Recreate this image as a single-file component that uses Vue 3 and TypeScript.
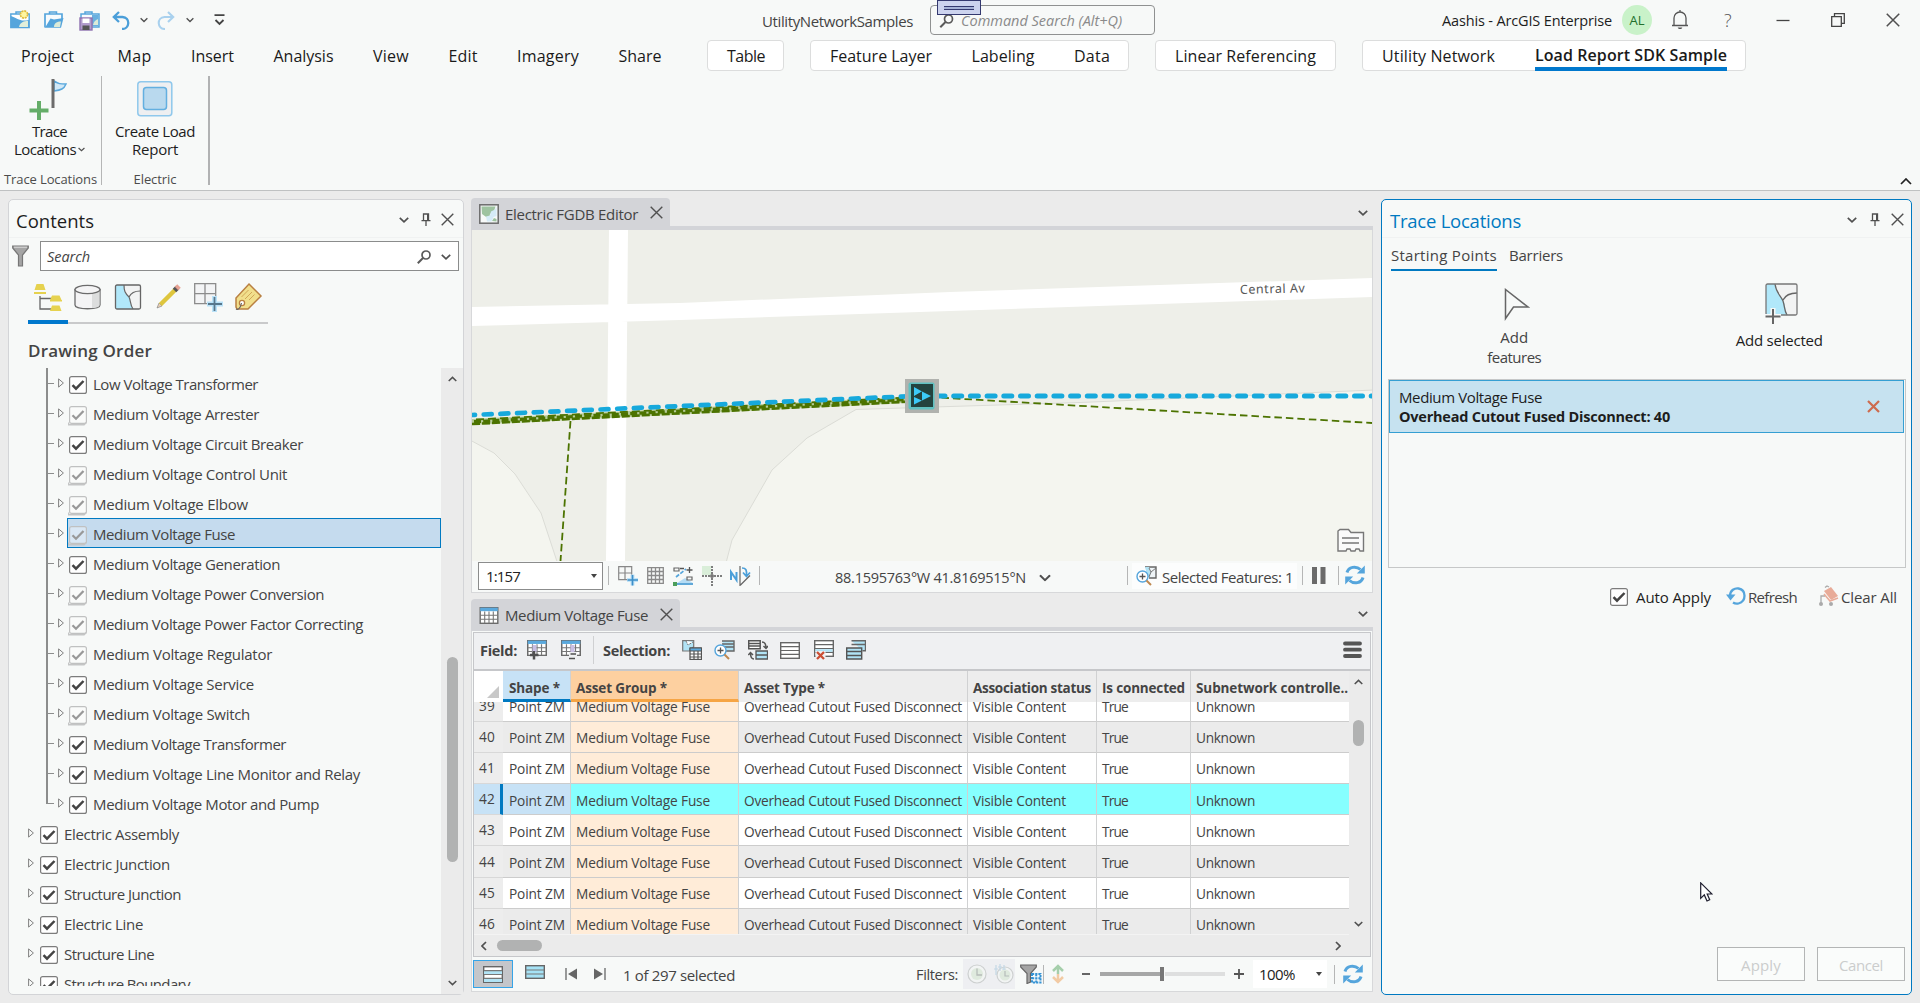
<script setup lang="ts">
interface Layer {
  name: string
  width: number
  dim?: boolean
  selected?: boolean
}

interface Column {
  title: string
  width: number
  value: string
  valueWidth: number
}

/* Tracks a label so that it fills the width of its slot. */
const vFit = {
  mounted(el: HTMLElement, binding: { value: number }) {
    const natural = el.getBoundingClientRect().width
    const count = (el.textContent ?? '').length
    if (count > 0) el.style.letterSpacing = `${(binding.value - natural) / count}px`
  },
}

const tabs = [
  { name: 'Project', width: 53 },
  { name: 'Map', width: 34 },
  { name: 'Insert', width: 43 },
  { name: 'Analysis', width: 60 },
  { name: 'View', width: 36 },
  { name: 'Edit', width: 29 },
  { name: 'Imagery', width: 62 },
  { name: 'Share', width: 43 },
]

const childLayers: Layer[] = [
  { name: 'Low Voltage Transformer', width: 165 },
  { name: 'Medium Voltage Arrester', width: 166, dim: true },
  { name: 'Medium Voltage Circuit Breaker', width: 210 },
  { name: 'Medium Voltage Control Unit', width: 194, dim: true },
  { name: 'Medium Voltage Elbow', width: 155, dim: true },
  { name: 'Medium Voltage Fuse', width: 142, dim: true, selected: true },
  { name: 'Medium Voltage Generation', width: 187 },
  { name: 'Medium Voltage Power Conversion', width: 231, dim: true },
  { name: 'Medium Voltage Power Factor Correcting', width: 270, dim: true },
  { name: 'Medium Voltage Regulator', width: 179, dim: true },
  { name: 'Medium Voltage Service', width: 161 },
  { name: 'Medium Voltage Switch', width: 157, dim: true },
  { name: 'Medium Voltage Transformer', width: 193 },
  { name: 'Medium Voltage Line Monitor and Relay', width: 267 },
  { name: 'Medium Voltage Motor and Pump', width: 226 },
]

const groupLayers: Layer[] = [
  { name: 'Electric Assembly', width: 115 },
  { name: 'Electric Junction', width: 106 },
  { name: 'Structure Junction', width: 117 },
  { name: 'Electric Line', width: 79 },
  { name: 'Structure Line', width: 90 },
  { name: 'Structure Boundary', width: 126 },
]

const columns: Column[] = [
  { title: 'Shape *', width: 51, value: 'Point ZM', valueWidth: 56 },
  { title: 'Asset Group *', width: 91, value: 'Medium Voltage Fuse', valueWidth: 134 },
  { title: 'Asset Type *', width: 81, value: 'Overhead Cutout Fused Disconnect', valueWidth: 218 },
  { title: 'Association status', width: 118, value: 'Visible Content', valueWidth: 93 },
  { title: 'Is connected', width: 83, value: 'True', valueWidth: 26 },
  { title: 'Subnetwork controlle..', width: 152, value: 'Unknown', valueWidth: 59 },
]

const rowIds: number[] = [39, 40, 41, 42, 43, 44, 45, 46]
</script>

<template>
  <div class="app">
    <svg class="defs" width="0" height="0">
      <symbol id="chev" viewBox="0 0 10 6"><path d="M.8 .8 5 4.800 9.200.8" fill="none" stroke="#505050" stroke-width="1.700" /></symbol>
      <symbol id="close" viewBox="0 0 13 13"><path d="M.7.7 12.300 12.300M12.300.7.7 12.300" fill="none" stroke="#505050" stroke-width="1.400" /></symbol>
      <symbol id="pin" viewBox="0 0 10 13"><path d="M2.500 7.500V1h5v6.500M.5 7.700h9M5 8v5" fill="none" stroke="#505050" stroke-width="1.300" /><path d="M6 1h1.600v6.500H6z" fill="#505050" /></symbol>
      <symbol id="mag" viewBox="0 0 14 14"><circle cx="9" cy="5" r="4" fill="none" stroke="#5a5a5a" stroke-width="1.700" /><path d="M6 8 .8 13.200" stroke="#5a5a5a" stroke-width="2" /></symbol>
      <symbol id="check" viewBox="0 0 18 18"><rect x=".6" y=".6" width="16.800" height="16.800" rx="2" fill="#fff" stroke="#7c7c7c" stroke-width="1.200" /><path d="M3.500 9.200 7 12.700 14.500 5" fill="none" stroke="#444" stroke-width="2.500" /></symbol>
      <symbol id="checkdim" viewBox="0 0 19 20"><rect x="1.600" y=".6" width="16.800" height="16.800" rx="2" fill="#fff" fill-opacity=".35" stroke="#c0c1c1" stroke-width="1.200" /><path d="M4.500 9.200 8 12.700 15.500 5" fill="none" stroke="#999" stroke-width="2.300" /><path d="M.5 16.500v2.300h15.500l2-2" fill="none" stroke="#c4c5c5" stroke-width="1.600" /></symbol>
      <symbol id="arrow" viewBox="0 0 6 10"><path d="M.6.9v8.200L5.400 5z" fill="none" stroke="#808080" stroke-width="1" /></symbol>
      <symbol id="sync" viewBox="0 0 20 20"><path d="M2 7.500C3.500 1.800 11 .5 15.500 4.500M18 12.500C16.500 18.200 9 19.500 4.500 15.500" fill="none" stroke="#55a5dc" stroke-width="3" /><path d="M19.800.5v8h-8zM.2 19.500v-8h8z" fill="#55a5dc" /></symbol>
      <symbol id="grid" viewBox="0 0 19 17"><rect x=".7" y=".7" width="17.600" height="15.600" fill="#fff" stroke="#6b6b6b" stroke-width="1.400" /><path d="M.7.700h17.600v3.500H.7z" fill="#5ba9dd" /><path d="M1 8.300h17M1 12.200h17M5.200 4.500V16M9.500 4.500V16M13.800 4.500V16" stroke="#777" stroke-width="1.100" /></symbol>
      <symbol id="rows" viewBox="0 0 20 17"><rect x=".7" y=".7" width="18.600" height="15.600" fill="#fff" stroke="#666" stroke-width="1.400" /><path d="M1 4.600h18M1 8.500h18M1 12.400h18" stroke="#666" stroke-width="1.200" /></symbol>
    </svg>

    <header class="ribbon">
      <div class="titlebar">
        <div class="quick">
          <svg class="q1" width="20" height="20" viewBox="0 0 20 20"><path d="M6 4V2h6v2" fill="none" stroke="#55a5dc" stroke-width="1.500" /><path d="M.8 4h18.400v13.500H.8z" fill="#fff" stroke="#55a5dc" stroke-width="1.400" /><path d="M.8 6C8 8 9 12 19 10v8H.8z" fill="#55a5dc" /><path d="M9 17c1-5 5-6 9-6v6z" fill="#e2efda" /><circle cx="14" cy="4.500" r="3.600" fill="#fff5a0" stroke="#dfba3c" stroke-width="1.600" stroke-dasharray="2 .8" /></svg>
          <svg class="q2" width="20" height="20" viewBox="0 0 20 20"><path d="M5.500 4V2h7v2" fill="none" stroke="#55a5dc" stroke-width="1.500" /><path d="M1 17.500V4h17v5" fill="#f7fbfd" stroke="#55a5dc" stroke-width="1.700" /><path d="M1 17.800 6.500 8.500 10 9.500 19.500 8 17 17.800z" fill="#55a5dc" /><path d="M10 17c0-4 3-5.500 7-5.500l-1 5.500z" fill="#dcebd8" /></svg>
          <svg class="q3" width="21" height="21" viewBox="0 0 21 21"><path d="M6 4V2h7v2" fill="none" stroke="#55a5dc" stroke-width="1.500" /><path d="M2 8V4h18v13h-7" fill="#f7fbfd" stroke="#55a5dc" stroke-width="1.500" /><path d="M13 5h6.500v11H13z" fill="#6ab0df" /><path d="M14 15c1-4 3-5 5-6v6z" fill="#dcebd8" /><rect x="1" y="8" width="12" height="12" fill="#b29ccc" stroke="#8e72b0" stroke-width="1.400" /><path d="M3.500 8.500h7v4.500h-7z" fill="#fff" /><path d="M3.500 15.500h7V20h-7z" fill="#555" /></svg>
          <svg class="q4" width="18" height="19" viewBox="0 0 18 19"><path d="M7 1 1.800 6 7 11M2 6h8.500c8 .5 7.500 12-.5 12" fill="none" stroke="#4b9fd9" stroke-width="2.300" /></svg>
          <svg class="q5" width="8" height="6"><use href="#chev" /></svg>
          <svg class="q6" width="18" height="19" viewBox="0 0 18 19"><path d="M11 1 16.200 6 11 11M16 6H7.500C-.5 6.500 0 18 8 18" fill="none" stroke="#a9d1ee" stroke-width="2.100" /></svg>
          <svg class="q7" width="8" height="6"><use href="#chev" /></svg>
          <svg class="q8" width="11" height="12" viewBox="0 0 11 12"><path d="M.5 1.200h10M1.500 6l4 4 4-4" fill="none" stroke="#444" stroke-width="1.800" /></svg>
        </div>
        <span class="project" v-fit="151">UtilityNetworkSamples</span>
        <div class="command">
          <svg width="15" height="14"><use href="#mag" /></svg>
          <i v-fit="161">Command Search (Alt+Q)</i>
          <div class="handle"><b></b></div>
        </div>
        <span class="user" v-fit="170">Aashis - ArcGIS Enterprise</span>
        <span class="avatar">AL</span>
        <svg class="bell" width="18" height="20" viewBox="0 0 18 20"><path d="M1 15.500h16M3 15.300V8a6 6 0 0 1 12 0v7.300M9 2V0" fill="none" stroke="#555" stroke-width="1.300" /><path d="M6.700 17.500h4.600c-.5 2-4 2-4.600 0z" fill="#555" /></svg>
        <span class="help">?</span>
        <svg class="minimize" width="14" height="14" viewBox="0 0 14 14"><path d="M.5 7.500h13" stroke="#444" stroke-width="1.300" /></svg>
        <svg class="restore" width="14" height="14" viewBox="0 0 14 14"><path d="M.7 3.700h9.600v9.600H.7zM3.500 3.500V.7h9.800v9.600h-2.800" fill="none" stroke="#444" stroke-width="1.300" /></svg>
        <svg class="quit" width="14" height="14"><use href="#close" /></svg>
      </div>

      <nav class="tabs">
        <div class="plain"><span v-for="t in tabs" :key="t.name" v-fit="t.width">{{ t.name }}</span></div>
        <div class="context c1"><span v-fit="38">Table</span></div>
        <div class="context c2"><span v-fit="102">Feature Layer</span><span v-fit="63">Labeling</span><span v-fit="36">Data</span></div>
        <div class="context c3"><span v-fit="141">Linear Referencing</span></div>
        <div class="context c4"><span v-fit="113">Utility Network</span><b class="active"><span v-fit="192">Load Report SDK Sample</span></b></div>
      </nav>

      <div class="tools">
        <div class="group g1">
          <svg width="40" height="42" viewBox="0 0 40 42"><path d="M26 3c5 3 6 3 12 3-2 5-5 6-12 7z" fill="#d2e9f7" stroke="#5aa8dc" stroke-width="1.500" /><path d="M25 1v29" stroke="#6c6c6c" stroke-width="3" /><path d="M11 23v19M1.500 32.500h19" stroke="#64ad68" stroke-width="4" /></svg>
          <p><span v-fit="35">Trace</span></p>
          <p><span v-fit="62">Locations</span><svg width="7" height="5"><use href="#chev" /></svg></p>
          <small><span v-fit="93">Trace Locations</span></small>
        </div>
        <div class="group g2">
          <svg width="36" height="42" viewBox="0 0 36 42"><rect x=".8" y="3.800" width="34" height="34" rx="3" fill="#eeeff1" stroke="#8fc8ec" stroke-width="1.500" /><rect x="6.500" y="9.500" width="23" height="22" rx="3" fill="#b9d9ee" stroke="#63afe0" stroke-width="1.500" /></svg>
          <p><span v-fit="80">Create Load</span></p>
          <p><span v-fit="46">Report</span></p>
          <small><span v-fit="43">Electric</span></small>
        </div>
        <svg class="collapse" width="12" height="7" viewBox="0 0 12 7"><path d="M1 6 6 1l5 5" fill="none" stroke="#222" stroke-width="1.700" /></svg>
      </div>
    </header>

    <main class="workspace">
      <aside class="panel contents">
        <div class="panel-title">
          <h2 v-fit="78">Contents</h2>
          <svg class="t1" width="10" height="6"><use href="#chev" /></svg>
          <svg class="t2" width="10" height="13"><use href="#pin" /></svg>
          <svg class="t3" width="13" height="13"><use href="#close" /></svg>
        </div>
        <div class="search-row">
          <svg width="17" height="22" viewBox="0 0 17 22"><path d="M.7 1h15.600v2L10.500 10v11h-4V10L.7 3z" fill="#a5a5a5" stroke="#777" stroke-width="1.200" /><path d="M2 2.200h13" stroke="#ddd" /></svg>
          <div class="search"><i v-fit="43">Search</i><svg width="14" height="14"><use href="#mag" /></svg><svg width="10" height="6"><use href="#chev" /></svg></div>
        </div>
        <div class="views">
          <svg width="40" height="36" viewBox="0 0 40 36"><path d="M12 16v13h12M12 18.500h12" fill="none" stroke="#666" stroke-width="1.300" /><path d="M8.500 4h7l2 6H6.500zM6 12h12v2H6zM24 15.500h7.500l2 4.500H22zM24 25.500h7.500l2 5.500H22z" fill="#e6d24f" /><path d="M22 20h12v1.500H22z" fill="#e6d24f" /></svg>
          <svg width="40" height="36" viewBox="0 0 40 36"><path d="M7 9v16c0 5 25 5 25 0V9" fill="#f4f4f5" stroke="#6c6c6c" stroke-width="1.300" /><path d="M24 13c4-.5 7-1.500 7.500-3v15c0 2-3 3-7.500 3z" fill="#dcdddd" /><ellipse cx="19.500" cy="9.500" rx="12.500" ry="4.200" fill="#f4f4f5" stroke="#6c6c6c" stroke-width="1.300" /></svg>
          <svg width="40" height="36" viewBox="0 0 40 36"><rect x="7.500" y="5" width="25" height="24" rx="1.500" fill="#f2f3f3" /><path d="M7.500 5H16c0 6 1 8 5 12 1 3 1 9 5 12H7.500z" fill="#b1e8fa" /><path d="M16 5c0 6 1 8 5 12 2 4 1 8 4 12M21 17c2-4 6-6 11-6" fill="none" stroke="#666" stroke-width="1.200" /><rect x="7.500" y="5" width="25" height="24" rx="1.500" fill="none" stroke="#666" stroke-width="1.300" /></svg>
          <svg width="40" height="36" viewBox="0 0 40 36"><path d="m9 28 2-5 3 3z" fill="#ead0b5" stroke="#777" stroke-width=".6" /><path d="M12.500 24.500 27 10" stroke="#dec63e" stroke-width="4.500" /><path d="m26.500 10.500 3-3" stroke="#555" stroke-width="5" /><path d="m28.500 8.500 2.500-2.500" stroke="#e7a293" stroke-width="5" /></svg>
          <svg width="40" height="36" viewBox="0 0 40 36"><path d="M6.700 3.700h21v20h-21zM17 4v20M7 13.700h20" fill="#f3f4f5" stroke="#8c8c8c" stroke-width="1.300" /><path d="M26.500 16v16M19 24h16" stroke="#b9e2f8" stroke-width="5" /><path d="M26.500 17v14M20 24h14" stroke="#58778c" stroke-width="1.800" /></svg>
          <svg width="40" height="36" viewBox="0 0 40 36"><path d="M21 4 33 16 20 29H9l-1-2V18z" fill="#f1df8c" stroke="#b98042" stroke-width="1.500" /><path d="m13.500 17 7-7M17 19l7-7M21 20l5.500-5.500" stroke="#d1a757" stroke-width="1" /><circle cx="14" cy="23" r="2.600" fill="#fff" stroke="#b98042" stroke-width="1.300" /><path d="M13.500 23c-1 6-4 7-5.500 6" fill="none" stroke="#666" stroke-width="1.100" /></svg>
        </div>
        <h3><span v-fit="124">Drawing Order</span></h3>
        <div class="tree-area">
          <div class="tree">
            <div class="children">
              <div v-for="l in childLayers" :key="l.name" class="node child">
                <span class="tick"></span>
                <svg class="expander" width="6" height="10"><use href="#arrow" /></svg>
                <div class="node-body" :class="{ selected: l.selected }">
                  <svg v-if="l.dim" class="dim" width="19" height="20"><use href="#checkdim" /></svg>
                  <svg v-else width="18" height="18"><use href="#check" /></svg>
                  <span v-fit="l.width">{{ l.name }}</span>
                </div>
              </div>
            </div>
            <div v-for="l in groupLayers" :key="l.name" class="node">
              <svg class="expander" width="6" height="10"><use href="#arrow" /></svg>
              <div class="node-body"><svg width="18" height="18"><use href="#check" /></svg><span v-fit="l.width">{{ l.name }}</span></div>
            </div>
          </div>
          <div class="vscroll">
            <svg width="9" height="6" class="up"><use href="#chev" /></svg>
            <div class="thumb"></div>
            <svg width="9" height="6"><use href="#chev" /></svg>
          </div>
        </div>
      </aside>

      <section class="center">
        <div class="view map-view">
          <div class="tabstrip">
            <div class="doc-tab">
              <svg width="20" height="20" viewBox="0 0 20 20"><rect x=".8" y=".8" width="18.400" height="18.400" fill="#f7f9f8" stroke="#6b6b6b" stroke-width="1.500" /><path d="M2.500 2.500h14L15 7l-4 3-1 5-7-5z" fill="#9ec3a0" /><path d="M17.500 3v9l-3 1-2 4.500H8l-1-5 4-1 1-4 4-2z" fill="#d5ebf7" /><path d="m13 17 2-3 2.500 1v2.500z" fill="#9ec3a0" /></svg>
              <span v-fit="133">Electric FGDB Editor</span>
              <svg width="13" height="13"><use href="#close" /></svg>
            </div>
            <svg width="10" height="6"><use href="#chev" /></svg>
          </div>
          <svg class="map" width="900" height="331" viewBox="472 230 900 331">
            <path fill="#eeefe9" d="M472 230h900v331H472z" />
            <g fill="#f4f5ef" stroke="#dbdcd6">
              <path d="M470 440 494 453 515 474 541 513 557.500 563H470z" />
              <path d="M726 563 732 540 772 470 807 438 856 409.500 950 406.500 1080 402.500 1374 390V563z" />
            </g>
            <path fill="#fff" d="M609 230h19l-3 331h-19zM472 307 680 303 950 292 1372 278v19L950 311 680 320 472 326z" />
            <text x="1240" y="294" transform="rotate(-1.500 1240 294)" textLength="65" font-family="Noto Sans, sans-serif" font-size="12.500" fill="#555">Central Av</text>
            <g fill="none" stroke="#4c7300">
              <path d="M570.500 421 560.500 561" stroke-width="1.800" stroke-dasharray="7.500 3.700" />
              <path d="m930 397 442 26" stroke-width="1.800" stroke-dasharray="7.500 4" />
              <path d="M472 422 922 399" stroke="#b7cc98" stroke-width="6" />
              <path d="M472 424 922 401" stroke-width="2.600" stroke-dasharray="8 2" />
              <path d="M474 421.700 922 398.700" stroke-width="3.200" stroke-dasharray="7 2.200" />
              <path d="M476 419.500 922 396.700" stroke-width="1.800" stroke-dasharray="8 4" />
            </g>
            <path d="M472 415 915 396" fill="none" stroke="#17a9dc" stroke-width="4.700" stroke-linecap="round" stroke-dasharray="8 8.700" stroke-dashoffset="5" />
            <path d="M937 396H1374" fill="none" stroke="#17a9dc" stroke-width="5" stroke-linecap="round" stroke-dasharray="8 8.700" />
            <path fill="#b0b2ae" d="M905 379h34v34h-34z" />
            <rect x="908.500" y="382.500" width="26" height="27" rx="2" fill="#5fc1c1" />
            <path fill="#23433f" d="M911 384h22v23h-22z" />
            <path fill="#3ccaf8" d="m914 387 8 4.500-8 4.500zm8 4.500 9 4.500-9 4.500zm-8 5.500 8 3.500-8 4z" />
            <path d="M922 391.500 915 396l7 4.500z" fill="#23433f" />
            <path d="M1338 551V531l2-1.500h8.500l2.500 3h12.500V551h-3.500l-1-2h-3l-1 2h-4l-1-2h-3l-1 2zM1342 538h17M1342 543h17" fill="#fafafa" stroke="#777" stroke-width="1.400" />
          </svg>
          <div class="map-bar">
            <div class="scale"><span v-fit="34">1:157</span><i class="drop"></i></div>
            <hr class="sep s1">
            <svg class="m1" width="20" height="20" viewBox="0 0 20 20"><path d="M.7.7h13v13H.7zM7 .7v13M.7 7h13" fill="none" stroke="#888" stroke-width="1.200" /><path d="M14.500 8.500v11M9 14h11" stroke="#c1e4f8" stroke-width="4" /><path d="M14.500 9v10.500M9.500 14H20" stroke="#3d8fc9" stroke-width="1.700" /></svg>
            <svg class="m2" width="17" height="17" viewBox="0 0 17 17"><path d="M.7.700h15.600v15.600H.7zM4.500.7v15.600M8.500.7v15.600M12.500.7v15.600M.7 4.500h15.600M.7 8.500h15.600M.7 12.500h15.600" fill="none" stroke="#8a8a8a" stroke-width="1.300" /></svg>
            <svg class="m3" width="21" height="20" viewBox="0 0 21 20"><path d="M4 17 12 12l8 5z" fill="#b5dcf4" /><path d="M3 18h17" stroke="#4e9fd4" stroke-width="1.800" /><path d="M1 2h5v3H1zM14 11h5v3h-5z" fill="none" stroke="#666" stroke-width="1.200" /><path d="M3 11 13 3" stroke="#55a5dc" stroke-width="1.700" stroke-dasharray="4 1.500" /><path d="M16.500 1v6M13.500 4h6M7 2.500h4" stroke="#555" stroke-width="1.300" /><path d="M0 16h4v4H0z" fill="#4c9e5a" /></svg>
            <svg class="m4" width="20" height="20" viewBox="0 0 20 20"><path d="M0 0h9v9H0z" fill="#d9eed9" /><path d="M10 0v20M0 10h20" stroke="#555" stroke-width="1.500" stroke-dasharray="2 1" /><circle cx="10" cy="10" r="2" fill="#777" /></svg>
            <svg class="m5" width="21" height="20" viewBox="0 0 21 20"><path d="M1 14V6l5.500 8V6" fill="none" stroke="#4b9fd9" stroke-width="2" /><path d="M10 0v20M10.500 19 20 9.500" stroke="#666" stroke-width="1.200" /><path d="M12 2c4 0 5 2 4.500 8M13 6.500l3.500 4 3.500-4" fill="none" stroke="#4b9fd9" stroke-width="1.700" /></svg>
            <hr class="sep s2">
            <span class="coords" v-fit="191">88.1595763°W 41.8169515°N</span>
            <svg class="m6" width="12" height="8" viewBox="0 0 10 6"><use href="#chev" /></svg>
            <hr class="sep s3">
            <div class="selcount">
              <svg width="21" height="20" viewBox="0 0 21 20"><path d="M9 1h11v11h-7" fill="#eef4f7" stroke="#666" stroke-width="1.400" /><path d="M9 1h4l2 6-3 5z" fill="#b1e3f5" /><path d="m13 2 2 4 5-4M15 6l-2 5" fill="none" stroke="#777" /><circle cx="6.500" cy="10.500" r="5.500" fill="#fff" stroke="#55a5dc" stroke-width="1.400" /><path d="M3.500 10.500h6M6.500 7.500v6" stroke="#555" stroke-width="1.300" /><path d="m10.500 14.500 4.500 4.500" stroke="#bf8850" stroke-width="2" /></svg>
              <span v-fit="131">Selected Features: 1</span>
            </div>
            <hr class="sep s4">
            <svg class="m7" width="14" height="17" viewBox="0 0 14 17"><path d="M0 0h5v17H0zM8.500 0h5v17h-5z" fill="#6a6a6a" /></svg>
            <hr class="sep s5">
            <svg class="m8" width="20" height="20"><use href="#sync" /></svg>
          </div>
        </div>

        <div class="view table-view">
          <div class="tabstrip">
            <div class="doc-tab">
              <svg width="20" height="17"><use href="#grid" /></svg>
              <span v-fit="143">Medium Voltage Fuse</span>
              <svg width="13" height="13"><use href="#close" /></svg>
            </div>
            <svg width="10" height="6"><use href="#chev" /></svg>
          </div>
          <div class="table-tools">
            <b class="field"><span v-fit="37">Field:</span></b>
            <svg class="b1" width="20" height="20" viewBox="0 0 20 20"><svg width="20" height="16" viewBox="0 0 19 17" preserveAspectRatio="none"><use href="#grid" /></svg><path d="M5.500 5h4v7h-4z" fill="#c9bfe4" /><path d="M7 11v8.500M3 15h8.500" stroke="#505050" stroke-width="2.500" /></svg>
            <svg class="b2" width="20" height="20" viewBox="0 0 20 20"><svg width="20" height="16" viewBox="0 0 19 17" preserveAspectRatio="none"><use href="#grid" /></svg><path d="M9.500 5h4v7h-4z" fill="#c9bfe4" /><path d="M8 12h8v8H8z" fill="#eff0f2" /><path d="M9.500 14h5.500M8 18.500h6" stroke="#505050" stroke-width="1.600" /></svg>
            <hr class="bar">
            <b class="selection"><span v-fit="67">Selection:</span></b>
            <svg class="b3" width="20" height="20" viewBox="0 0 20 20"><path d="M.7.700h11v6L8 11H.7z" fill="#b1e3f5" stroke="#777" stroke-width="1.200" /><path d="m4 1 2 4 5-3" fill="#fff" stroke="#777" stroke-dasharray="2 1" /><rect x="8" y="8" width="11.500" height="11.500" fill="#fff" stroke="#555" stroke-width="1.300" /><path d="M8 8h11.500v3H8z" fill="#5ba9dd" stroke="#555" /><path d="M8 14h12M8 17h12M12 11v9M16 11v9" stroke="#555" stroke-width="1.200" /></svg>
            <svg class="b4" width="21" height="20" viewBox="0 0 21 20"><path d="M8 1h12v10h-9M8 4h12M10 7h10" fill="#b1e3f5" stroke="#666" stroke-width="1.400" /><circle cx="6.500" cy="10.500" r="5.500" fill="#fff" stroke="#55a5dc" stroke-width="1.400" /><path d="M3.500 10.500h6M6.500 7.500v6" stroke="#555" stroke-width="1.300" /><path d="m10.500 14.500 4.500 4.500" stroke="#bf8850" stroke-width="2" /></svg>
            <svg class="b5" width="20" height="20" viewBox="0 0 20 20"><path d="M.7.700h11.500v8H.7zM.7 3.500h11M.7 6h11" fill="#fff" stroke="#555" stroke-width="1.500" /><path d="M8 11h11.500v8H8zM8 15h11.500" fill="#b1e3f5" stroke="#555" stroke-width="1.300" /><path d="M14 2c3 0 4 2 4 6M15.500 6 18 8.500 20 6M6 19c-3 0-3.500-2-3.500-6M.3 15 2.500 12.500 5 15" fill="none" stroke="#555" stroke-width="1.500" /></svg>
            <svg class="b6" width="20" height="17"><use href="#rows" /></svg>
            <svg class="b7" width="20" height="20" viewBox="0 0 20 20"><svg width="20" height="17"><use href="#rows" /></svg><path d="M1.500 9.200h17v2.600h-17z" fill="#b1e3f5" /><path d="M1.500 11h10v9h-10z" fill="#eff0f2" /><path d="m3 12 7 7M10 12l-7 7" stroke="#cb4f35" stroke-width="2.300" /></svg>
            <svg class="b8" width="20" height="20" viewBox="0 0 20 20"><path d="M5.500.700h14v10h-3M5.500 4.500h14" fill="#b1e3f5" stroke="#666" stroke-width="1.400" /><path d="M.7 8h15v11H.7zM.7 11.500h15M.7 15.500h15" fill="#b1e3f5" stroke="#555" stroke-width="1.400" /></svg>
            <svg class="menu" width="19" height="18" viewBox="0 0 19 18"><path d="M2 2.500h15M2 8.700h15M2 15h15" stroke="#555" stroke-width="3.800" stroke-linecap="round" /></svg>
          </div>
          <div class="sheet">
            <div class="sheet-main">
              <div class="line head">
                <div class="corner"><i></i></div>
                <b v-for="c in columns" :key="c.title" class="cell"><span v-fit="c.width">{{ c.title }}</span></b>
              </div>
              <div class="body">
                <div v-for="id in rowIds" :key="id" class="line row" :class="{ even: id % 2 === 0, picked: id === 42 }">
                  <div class="num"><span v-fit="16">{{ id }}</span></div>
                  <div v-for="c in columns" :key="c.title" class="cell"><span v-fit="c.valueWidth">{{ c.value }}</span></div>
                </div>
              </div>
              <div class="hscroll">
                <svg width="6" height="10" viewBox="0 0 6 10"><path d="M5 1 1 5l4 4" fill="none" stroke="#505050" stroke-width="1.700" /></svg>
                <div class="thumb"></div>
                <svg width="6" height="10" viewBox="0 0 6 10"><path d="m1 1 4 4-4 4" fill="none" stroke="#505050" stroke-width="1.700" /></svg>
              </div>
            </div>
            <div class="sheet-scroll">
              <svg width="9" height="6" class="up"><use href="#chev" /></svg>
              <div class="thumb"></div>
              <svg width="9" height="6"><use href="#chev" /></svg>
            </div>
          </div>
          <div class="table-foot">
            <div class="mode"><svg width="20" height="17" viewBox="0 0 20 17"><rect x=".7" y=".7" width="18.600" height="15.600" fill="#fff" stroke="#666" stroke-width="1.400" /><path d="M1 4.600h18v3.800H1zM1 12h18v4H1z" fill="#b1e3f5" /><path d="M1 4.600h18M1 8.500h18M1 12.400h18" stroke="#777" stroke-width="1.200" /></svg></div>
            <svg class="f1" width="20" height="14" viewBox="0 0 20 14"><rect x=".7" y=".7" width="18.600" height="12.600" fill="#a5e2f5" stroke="#666" stroke-width="1.400" /><path d="M1 5h18M1 9h18" stroke="#777" stroke-width="1.200" /></svg>
            <svg class="f2" width="13" height="12" viewBox="0 0 13 12"><path d="M1 0v12" stroke="#666" stroke-width="1.300" /><path d="M12 .5v11L3 6z" fill="#666" /></svg>
            <svg class="f3" width="13" height="12" viewBox="0 0 13 12"><path d="M12 0v12" stroke="#666" stroke-width="1.300" /><path d="M1 .5v11L10 6z" fill="#666" /></svg>
            <span class="count" v-fit="112">1 of 297 selected</span>
            <span class="filters" v-fit="42">Filters:</span>
            <div class="clocks">
              <svg width="20" height="20" viewBox="0 0 20 20"><circle cx="10" cy="10" r="9" fill="#f2f4f4" stroke="#cdd0d0" stroke-width="1.200" /><circle cx="10" cy="10" r="6" fill="#dfeade" /><path d="M10 4.500V11h5" fill="none" stroke="#b6bcb9" stroke-width="1.300" /></svg>
              <svg width="20" height="20" viewBox="0 0 20 20"><circle cx="11" cy="11" r="8" fill="#f2f4f4" stroke="#cdd0d0" stroke-width="1.200" /><circle cx="11" cy="11" r="5.500" fill="#dfeade" /><path d="M11 7v5h4" fill="none" stroke="#b6bcb9" stroke-width="1.200" /><path d="M2 1v10M6 0v7M10 1v5M0 5h4M4 3h4M8 5h4" stroke="#c3d7e5" stroke-width="1.200" /></svg>
            </div>
            <svg class="f4" width="22" height="20" viewBox="0 0 22 20"><path d="M.7 1h15.600v2L10.500 9.500V18L7 19.500v-10L.7 3z" fill="#a5a5a5" stroke="#666" stroke-width="1.200" /><path d="M11 9h10v10.500H11z" fill="#f7f9f8" /><path d="M12 10h8.500v8.500H12zM16.200 10v8.500M12 14.200h8.500" fill="none" stroke="#3593d4" stroke-width="2" stroke-dasharray="2.200 1" /></svg>
            <hr class="sep x1">
            <svg class="f5" width="12" height="20" viewBox="0 0 12 20"><path d="M6 1.500V10M1 7l5-5 5 5" fill="none" stroke="#a5cfab" stroke-width="2.500" /><path d="M6 10v8.500M1 13l5 5 5-5" fill="none" stroke="#f2cba4" stroke-width="2.500" /></svg>
            <svg class="f6" width="8" height="12" viewBox="0 0 8 12"><path d="M0 6h8" stroke="#555" stroke-width="1.800" /></svg>
            <div class="slider"><i></i><b></b><i></i></div>
            <svg class="f7" width="10" height="12" viewBox="0 0 10 12"><path d="M0 6h10M5 1v10" stroke="#555" stroke-width="1.800" /></svg>
            <div class="zoom"><span v-fit="36">100%</span><i class="drop"></i></div>
            <hr class="sep x2">
            <svg class="f8" width="20" height="20"><use href="#sync" /></svg>
          </div>
        </div>
      </section>

      <aside class="panel trace">
        <div class="panel-title">
          <h2 v-fit="131">Trace Locations</h2>
          <svg class="t1" width="10" height="6"><use href="#chev" /></svg>
          <svg class="t2" width="10" height="13"><use href="#pin" /></svg>
          <svg class="t3" width="13" height="13"><use href="#close" /></svg>
        </div>
        <div class="subtabs"><div class="on"><span v-fit="106">Starting Points</span></div><div><span v-fit="54">Barriers</span></div></div>
        <div class="actions">
          <div class="add">
            <svg width="26" height="33" viewBox="0 0 26 33"><path d="M1.500 1.500v29l8-11.500H24z" fill="none" stroke="#666" stroke-width="1.500" /></svg>
            <span v-fit="28">Add</span><span v-fit="54">features</span>
          </div>
          <div class="add-selected">
            <svg width="34" height="42" viewBox="0 0 34 42"><rect x="1" y="1" width="31" height="31" rx="1.500" fill="#f2f3f3" /><path d="M1 1h9c1 10 6 12 9 18 2 7 1 10 4 13H1z" fill="#b1e8fa" /><path d="M10 1c1 9 6 12 8 17 2 6 1 9 4 14M18 17c2-4 7-7 14-7" fill="none" stroke="#666" stroke-width="1.300" /><rect x="1" y="1" width="31" height="31" rx="1.500" fill="none" stroke="#777" stroke-width="1.300" /><path d="M8 25v16M0 33.500h16" stroke="#f7f9f8" stroke-width="5" /><path d="M8 26v15M.5 33.500h15" stroke="#666" stroke-width="2" /></svg>
            <span v-fit="87">Add selected</span>
          </div>
        </div>
        <div class="points">
          <div class="point">
            <div><span v-fit="143">Medium Voltage Fuse</span><b><span v-fit="271">Overhead Cutout Fused Disconnect: 40</span></b></div>
            <svg width="13" height="13" viewBox="0 0 13 13"><path d="m1 1 11 11M12 1 1 12" stroke="#cd6b4e" stroke-width="2.200" /></svg>
          </div>
        </div>
        <div class="options">
          <svg width="18" height="18"><use href="#check" /></svg>
          <span class="auto" v-fit="75">Auto Apply</span>
          <svg class="o1" width="20" height="18" viewBox="0 0 20 18"><path d="M4 9C4 3 9 1 12.500 1.500c8 1.500 8 13 0 15-2 .5-4 0-5.500-1" fill="none" stroke="#55a5dc" stroke-width="2.300" /><path d="M0 7.500h9.500l-5 6z" fill="#55a5dc" /></svg>
          <span v-fit="49">Refresh</span>
          <svg class="o2" width="20" height="21" viewBox="0 0 20 21"><path d="M2 18V11h4M6 2.500 8 1l2 1" fill="none" stroke="#aaa" stroke-width="1.300" /><circle cx="2" cy="19" r="2" fill="#aaa" /><circle cx="12" cy="19" r="2" fill="#aaa" /><path d="m5 6 7-4 7 9-7 4z" fill="#e8ab98" /><path d="m5 9 6 7 8-3" fill="none" stroke="#e8ab98" stroke-width="1.500" /></svg>
          <span v-fit="56">Clear All</span>
        </div>
        <div class="buttons"><div><span v-fit="40">Apply</span></div><div><span v-fit="44">Cancel</span></div></div>
      </aside>
    </main>
    <svg class="pointer" width="13" height="20" viewBox="0 0 13 20"><path d="M.7.900v15.500l3.600-3.500L7 19l2.700-1.200L7.200 12H12z" fill="#fff" stroke="#1d1d2d" stroke-width="1.200" /></svg>
  </div>
</template>

<style>
body { margin: 0; overflow: hidden; }
</style>

<style scoped>
* { box-sizing: border-box; }
.app {
  width: 1920px; height: 1003px; overflow: hidden; position: relative;
  background: #ebebeb; color: #444; display: flex; flex-direction: column;
  font: 15px/20px "Open Sans", "Noto Sans", sans-serif; white-space: nowrap;
}
.defs { position: absolute; }
svg { display: block; flex: none; }
span, i, h2 { display: inline-block; flex: none; }
hr { border: 0; margin: 0; flex: none; }
p, h2, h3 { margin: 0; }

/* ribbon */
.ribbon { height: 191px; flex: none; background: #f7f9f8; border-bottom: 1px solid #bfc1c2; }
.titlebar { height: 40px; display: flex; align-items: center; }
.quick { width: 762px; display: flex; align-items: center; padding-left: 10px; flex: none; }
.q2 { margin-left: 14px; }
.q3 { margin-left: 15px; }
.q4 { margin-left: 12px; margin-top: 1px; }
.q5 { margin-left: 10px; }
.q6 { margin-left: 9px; margin-top: 1px; }
.q7 { margin-left: 11px; }
.q8 { margin-left: 20px; }
.project { color: #444; margin-top: 1px; }
.command {
  position: relative; margin-left: 17px; width: 225px; height: 30px;
  border: 1px solid #8f9191; border-radius: 4px; display: flex; align-items: center; padding: 2px 0 0 8px; flex: none;
}
.command i { margin-left: 7px; color: #8a8a8a; font-size: 14.500px; }
.handle { position: absolute; left: 6px; top: -6px; width: 44px; height: 15px; background: #ccd3ee; border: 1px solid #34396f; padding: 5px 6px; }
.handle b { display: block; height: 4px; border: solid #34396f; border-width: 1px 0; background: #a6b2d6; }
.user { margin: 1px 0 0 287px; color: #1d1d1d; font-size: 14.500px; }
.avatar { margin-left: 10px; width: 30px; height: 30px; border-radius: 50%; background: #c9f2c9; color: #22702c; font-size: 13px; line-height: 30px; text-align: center; font-weight: 500; }
.bell { margin-left: 19px; }
.help { margin-left: 35px; width: 11px; font-size: 18px; color: #555; font-weight: 300; }
.minimize { margin-left: 41px; }
.restore { margin-left: 41px; }
.quit { margin-left: 41px; }

.tabs { height: 31px; display: flex; font-size: 16px; color: #1a1a1a; }
.plain { width: 707px; padding-left: 21px; display: flex; gap: 39.500px; align-items: center; flex: none; }
.plain span:first-child { margin-right: 4px; }
.context { height: 31px; background: #fff; border: 1px solid #dcdddd; border-radius: 4px; display: flex; align-items: center; padding-left: 19px; flex: none; gap: 40px; }
.c1 { width: 77px; }
.c2 { width: 319px; margin-left: 26px; gap: 39.500px; }
.c3 { width: 181px; margin-left: 26px; }
.c4 { width: 384px; margin-left: 26px; }
.active { height: 31px; border-bottom: 4px solid #0078cd; font-weight: 600; display: flex; align-items: center; padding-top: 3px; }

.tools { display: flex; height: 119px; padding-top: 5px; position: relative; }
.group { display: flex; flex-direction: column; align-items: center; height: 109px; color: #1d1d1d; }
.group > svg { margin-top: 2px; }
.group p { line-height: 18px; height: 18px; display: flex; align-items: center; gap: 2px; }
.group p:first-of-type { margin-top: 2px; }
.group small { margin-top: auto; font-size: 13px; line-height: 12px; color: #4c4c4c; }
.g1 { width: 102px; border-right: 1px solid #b5b6b6; }
.g1 > svg { margin-left: -6px; }
.g1 > p { margin-left: -2px; }
.g2 { width: 108px; border-right: 2px solid #b1b2b3; }
.collapse { margin: 102px 8px 0 auto; }

/* shared panel chrome */
.workspace { display: flex; padding: 8px 8px 0; }
.panel { background: #f7f9f8; border: 1px solid #d3d4d7; border-radius: 5px; height: 796px; flex: none; display: flex; flex-direction: column; }
.panel-title { height: 38px; display: flex; align-items: center; padding-left: 7px; flex: none; border-bottom: 1px solid #f0f2f2; }
.panel-title svg { margin-top: 2px; }
.panel-title h2 { font-size: 18.500px; font-weight: 400; line-height: 24px; color: #1d1d1d; margin-right: auto; padding-top: 5px; }
.t2 { margin-left: 13px; }
.t3 { margin-left: 11px; }
.up { transform: rotate(180deg); }
.thumb { background: #b1b2b2; border-radius: 6px; flex: none; }
.drop { border: solid transparent; border-width: 4px 3.500px 0; border-top-color: #444; }

/* contents */
.contents { width: 456px; }
.contents .panel-title { padding-right: 9px; }
.contents .t2 { margin-left: 12px; }
.contents .t3 { margin-left: 10px; }
.search-row { height: 34px; padding-left: 3px; display: flex; align-items: flex-start; padding-top: 3px; flex: none; }
.search-row > svg { margin-top: 4px; }
.search { margin-left: 11px; width: 419px; height: 30px; background: #fff; border: 1px solid #8b8c8c; display: flex; align-items: center; padding: 1px 7px 0 6px; flex: none; }
.search i { margin-right: auto; font-size: 14.500px; }
.search svg + svg { margin-left: 10px; }
.views { margin: 7px 0 0 19px; width: 240px; height: 45px; padding-top: 1px; display: flex; flex: none; border-bottom: 2px solid #c9cacb; position: relative; }
.views::after { content: ""; position: absolute; left: 0; bottom: -2px; width: 40px; height: 4px; background: #0078cd; }
h3 { font-size: 17px; font-weight: 600; margin: 15px 0 0 19px; height: 29px; line-height: 23px; flex: none; }
.tree-area { flex: 1; display: flex; min-height: 0; }
.tree { width: 432px; height: 618px; overflow: hidden; padding-left: 19px; flex: none; }
.children { margin-left: 18px; position: relative; }
.children::before { content: ""; position: absolute; left: 0; top: 0; height: 436px; width: 2px; background: #8c8d8d; }
.node { height: 30px; display: flex; align-items: center; }
.node-body { margin-left: 3px; height: 30px; flex: 1; display: flex; align-items: center; padding-left: 2px; }
.node:not(.child) .node-body { margin-left: 4px; padding-left: 2px; }
.node-body > svg { margin-top: 4px; }
.node-body > .dim { margin: 5px 0 0 -1px; }
.node-body > span { margin-left: 6px; margin-top: 1px; }
.tick { width: 6px; height: 1px; background: #8c8d8d; margin: 0 4px 0 2px; }
.selected { background: #c5dbee; box-shadow: inset 0 0 0 1px #0079c1; }
.vscroll { width: 22px; background: #ebebeb; display: flex; flex-direction: column; align-items: center; padding: 8px 0; }
.vscroll .thumb { width: 11px; height: 205px; margin: 275px 0 auto; }

/* center */
.center { width: 902px; margin-left: 7px; flex: none; }
.view { border: 1px solid #d7d8da; border-top: 0; background: #f7f9f8; }
.tabstrip { height: 31px; margin: 0 -1px; background: #ebebeb; display: flex; align-items: center; justify-content: space-between; border-bottom: 4px solid #d3d4d8; padding-right: 5px; }
.doc-tab { height: 30px; padding: 2px 7px 0 8px; background: #d3d4d8; border-radius: 4px 4px 0 0; display: flex; align-items: center; }
.doc-tab span { margin: 0 12px 0 6px; }
.doc-tab svg:last-child { margin-top: -2px; }
.map { width: 900px; }
.map-bar { height: 31px; display: flex; align-items: center; padding: 0 0 2px 6px; }
.scale { width: 125px; height: 28px; border: 1px solid #8b8c8c; background: #fff; display: flex; align-items: center; justify-content: space-between; padding: 0 5px 0 7px; color: #222; margin-top: 1px; }
.sep { width: 1px; height: 19px; background: #b5b6b6; }
.s1 { margin-left: 5px; }
.m1 { margin-left: 9px; }
.m2 { margin: -1px 0 0 9px; }
.m3 { margin-left: 9px; }
.m4 { margin-left: 8px; }
.m5 { margin-left: 8px; }
.s2 { margin-left: 8px; }
.coords { margin-left: 75px; margin-top: 4px; font-size: 14.500px; }
.m6 { margin: 4px 0 0 13px; }
.s3 { margin-left: 76px; }
.selcount { margin-left: 4px; width: 165px; height: 26px; background: #fcfdfd; display: flex; align-items: center; padding-left: 4px; margin-top: 1px; }
.selcount span { margin-left: 5px; margin-top: 1px; }
.s4 { margin-left: 5px; }
.m7 { margin: -1px 0 0 9px; }
.s5 { margin-left: 12px; }
.m8 { margin: -1px 0 0 6px; }

.table-view { margin-top: 7px; height: 392px; }
.table-view .tabstrip { margin-bottom: 1px; }
.table-view .doc-tab { padding-top: 3px; }
.table-tools { margin: 0 1px; height: 38px; border: 1px solid #c6c7ca; background: #eff0f2; display: flex; align-items: center; padding: 0 8px 2px 6px; }
.table-tools b { font-weight: 700; font-size: 14.500px; padding-top: 2px; }
.b1 { margin-left: 10px; }
.b2 { margin-left: 14px; }
.bar { width: 1px; height: 28px; background: #cfd0d2; margin-left: 12px; }
.selection { margin-left: 9px; }
.b3 { margin-left: 12px; }
.b4 { margin-left: 12px; }
.b5 { margin-left: 13px; }
.b6 { margin-left: 12px; }
.b7 { margin-left: 14px; }
.b8 { margin-left: 12px; }
.menu { margin: -1px 0 0 auto; }
.sheet { margin: 0 1px; height: 287px; border: 1px solid #c6c7ca; display: flex; background: #ebebeb; }
.sheet-main { width: 875px; flex: none; }
.line { display: grid; grid-template-columns: 29px 68px 168px 229px 129px 94px 158px; }
.head { height: 31px; background: #ededed; }
.cell { padding-left: 5px; display: flex; align-items: center; border-right: 1.500px solid #d0d1d2; font-size: 13.700px; overflow: hidden; }
.cell:nth-child(2) { padding-left: 6px; }
.cell:last-child { border-right: 0; }
.head .cell { font-size: 13.500px; font-weight: 700; padding-top: 2px; }
.head .cell:nth-child(2) { background: #c7e2f6; border-bottom: 3px solid #0079c1; padding-top: 5px; }
.head .cell:nth-child(3) { background: #fdd0a0; border-bottom: 3px solid #f6a545; padding-top: 5px; }
.corner { background: #fff; display: flex; align-items: flex-end; justify-content: flex-end; padding: 0 4px 4px 0; }
.corner i { width: 12px; height: 12px; background: #c8c8c8; clip-path: polygon(100% 0, 100% 100%, 0 100%); }
.body { height: 232px; overflow: hidden; }
.row { height: 31.200px; }
.row:first-child { margin-top: -11.500px; }
.row .cell { background: #fff; border-bottom: 1.500px solid #ccc; padding-top: 3px; }
.row.even .cell { background: #ebebeb; }
.row .cell:nth-child(3) { background: #ffecd8; }
.row.picked .cell { background: #86ffff; }
.row.picked .cell:nth-child(2) { background: #c7e2f6; }
.num { background: #ededed; display: flex; align-items: center; padding-left: 5px; border-bottom: 1px solid #d8d8d8; font-size: 13.700px; }
.picked .num { background: #c7e2f6; border-right: 3px solid #0079c1; }
.hscroll { height: 22px; display: flex; align-items: center; padding: 0 8px 0 7px; border-top: 1px solid #f3f3f3; }
.hscroll .thumb { width: 45px; height: 11px; margin: 0 auto 0 10px; }
.sheet-scroll { flex: 1; display: flex; flex-direction: column; align-items: center; padding: 8px 2px 29px 0; }
.sheet-scroll .thumb { width: 11px; height: 26px; margin: 35px 0 auto; }
.table-foot { display: flex; align-items: center; height: 34px; padding-left: 1px; }
.mode { width: 40px; height: 28px; background: #c4c6ca; border: 1px solid #35a4e8; display: flex; align-items: center; justify-content: center; }
.f1 { margin: -5px 0 0 12px; }
.f2 { margin-left: 20px; }
.f3 { margin-left: 15px; }
.count { margin: 2px 0 0 17px; }
.filters { margin: 2px 0 0 181px; font-size: 14.500px; }
.clocks { margin-left: 5px; width: 52px; height: 30px; background: #eeeff2; display: flex; align-items: center; justify-content: space-between; padding: 0 1px 0 4px; }
.f4 { margin-left: 5px; }
.x1 { margin-left: 1px; }
.f5 { margin-left: 8px; }
.f6 { margin-left: 18px; }
.slider { margin: -1px 0 0 10px; width: 125px; display: flex; align-items: center; }
.slider i { height: 4px; width: 60px; background: #a6a7a7; }
.slider b { width: 4px; height: 14px; background: #777; margin-right: 1px; }
.slider i:last-child { background: #dedfdf; }
.f7 { margin-left: 9px; }
.zoom { margin-left: 9px; width: 74px; height: 28px; background: #fff; display: flex; align-items: center; justify-content: space-between; padding: 0 5px 0 6px; color: #222; }
.x2 { margin-left: 7px; }
.f8 { margin-left: 8px; }

/* trace locations */
.trace { width: 531px; margin-left: 8px; border-color: #0079c1; }
.trace .panel-title { padding: 0 7px 0 8px; }
.trace h2 { color: #0079c1; }
.subtabs { display: flex; padding-left: 9px; gap: 12px; height: 33px; flex: none; }
.subtabs > div { height: 33px; padding-top: 7px; }
.subtabs .on { border-bottom: 2px solid #0079c1; font-weight: 500; }
.actions { display: flex; height: 108px; flex: none; }
.add, .add-selected { width: 265px; display: flex; flex-direction: column; align-items: center; padding-top: 17px; }
.add svg { margin: 0 0 6px 6px; }
.add-selected { color: #1d1d1d; padding-top: 12px; }
.add-selected svg { margin: 0 0 5px 7px; }
.add-selected span { margin-left: 1px; }
.points { margin: 0 5px 0 6px; height: 189px; border: 1px solid #c6c8c8; flex: none; padding-right: 1px; }
.point { height: 53px; background: #c6e2f0; border: 1px solid #359fd3; display: flex; align-items: center; justify-content: space-between; padding: 0 23px 0 9px; color: #1d1d1d; }
.point > div { display: flex; flex-direction: column; align-items: flex-start; line-height: 20px; }
.point b { font-weight: 700; font-size: 14.500px; }
.options { display: flex; align-items: center; padding-left: 228px; margin-top: 17px; height: 24px; flex: none; }
.options .auto { margin-left: 8px; color: #1d1d1d; }
.options .o1 { margin: -3px 2px 0 15px; }
.options .o1 ~ span { margin-top: -1px; }
.options .o2 { margin: -3px 2px 0 22px; }
.buttons { margin: auto 6px 13px auto; display: flex; gap: 12px; }
.buttons div { width: 88px; height: 34px; border: 1px solid #b3b5b5; background: #fafcfb; color: #cbcdcd; display: flex; align-items: center; justify-content: center; padding-top: 1px; }
.pointer { position: absolute; left: 1700px; top: 882px; }
</style>
